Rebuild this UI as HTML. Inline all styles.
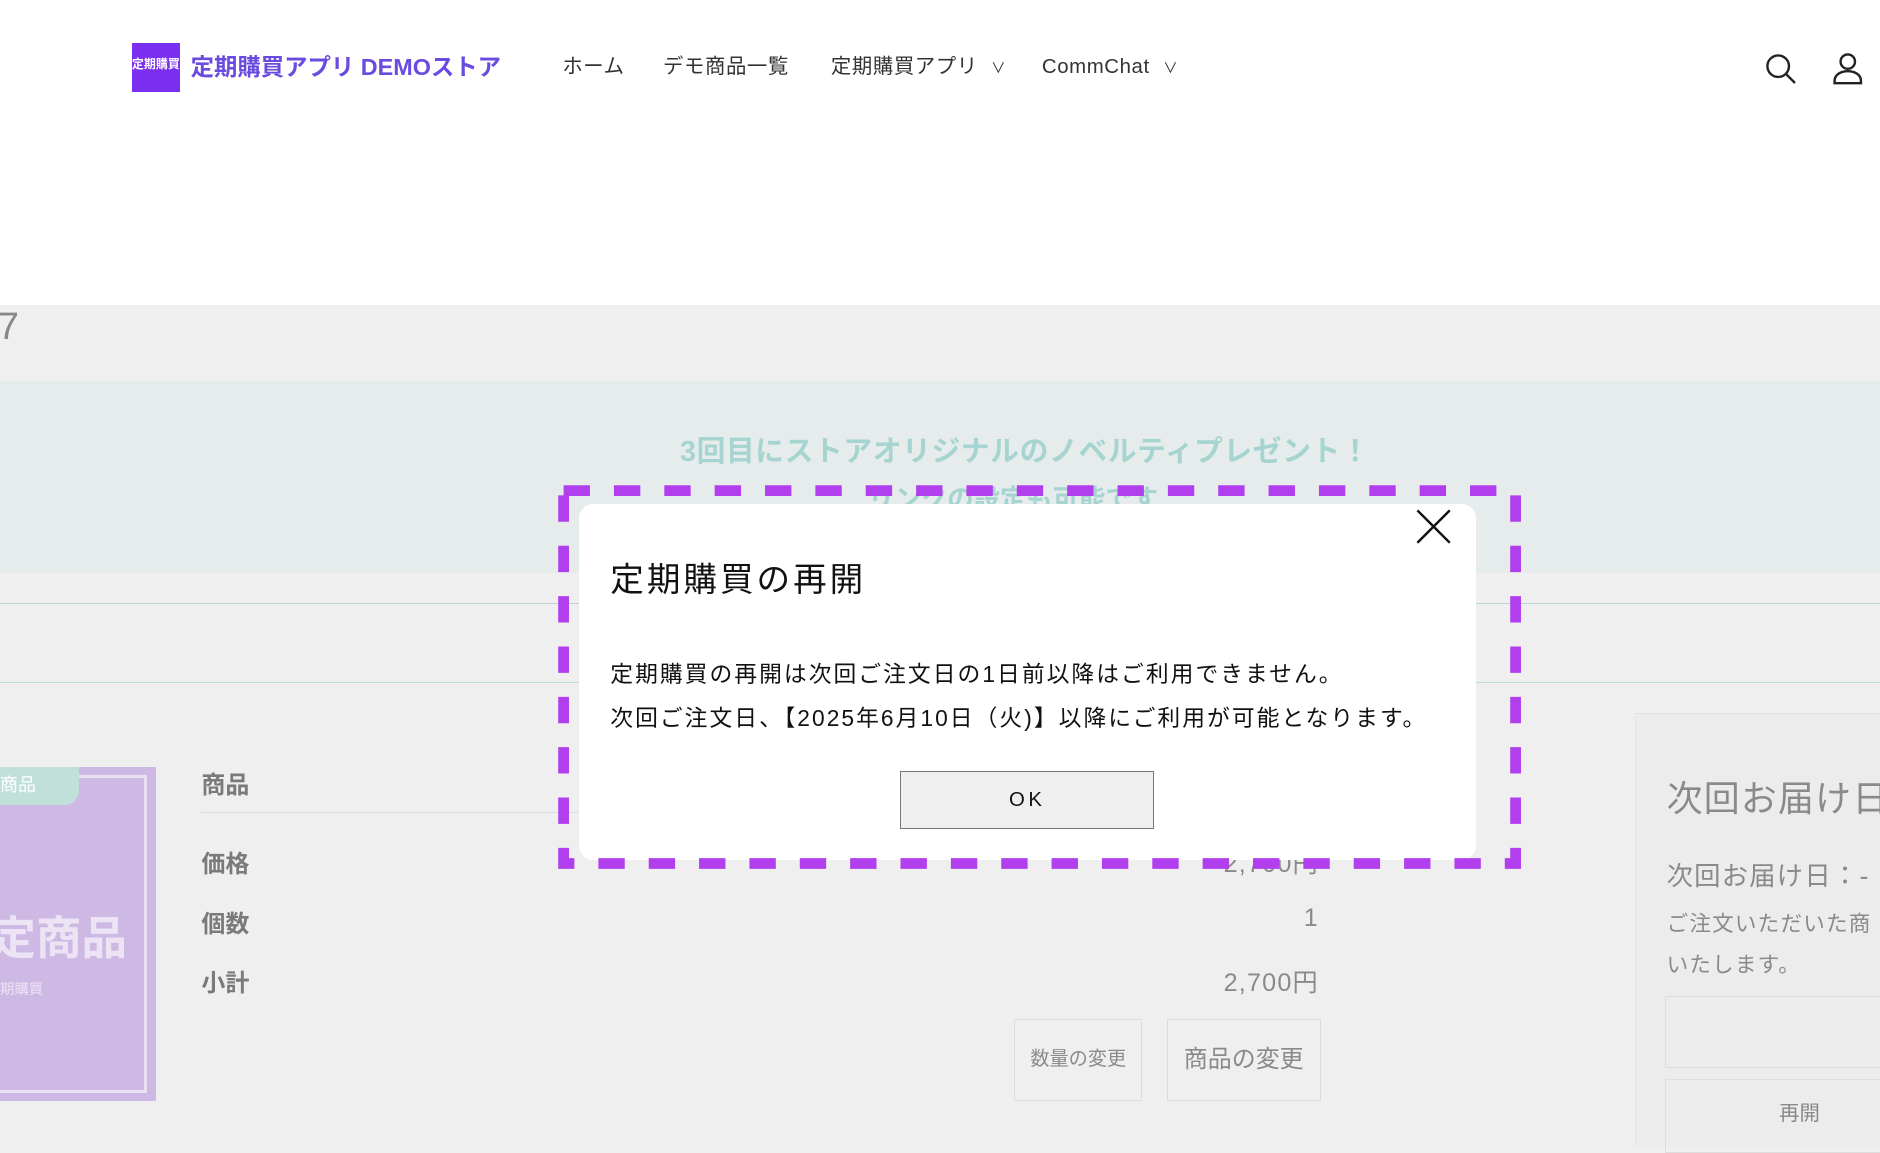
<!DOCTYPE html>
<html><head><meta charset="utf-8"><style>
html{zoom:1.19898}
body{margin:0;width:1568px;height:949px;overflow:hidden;position:relative;background:#efefef;font-family:"Liberation Sans","Noto Sans CJK JP",sans-serif;}
.a{position:absolute;white-space:nowrap}
.hdr{position:absolute;left:0;top:0;width:1568px;height:254px;background:#fff}
.nav{font-size:17px;color:#333;top:44px;height:24px;line-height:24px;letter-spacing:0.5px}
.lbl{font-size:20px;font-weight:bold;color:#7a7a7a;left:168px}
.val{font-size:21px;color:#8a8a8a;right:468px;letter-spacing:1px}
</style></head><body>
<div class="hdr"></div>
<div class="a" style="left:110px;top:36px;width:40px;height:41px;background:#7b2ff0;color:#fff;font-size:10px;font-weight:bold;line-height:36px;text-align:center">定期購買</div>
<div class="a" style="left:159px;top:44px;font-size:19.5px;line-height:24px;font-weight:bold;color:#6a4be0">定期購買アプリ DEMOストア</div>
<div class="a nav" style="left:469px">ホーム</div>
<div class="a nav" style="left:553px">デモ商品一覧</div>
<div class="a nav" style="left:693px">定期購買アプリ <span style="font-size:12px;margin-left:6px">∨</span></div>
<div class="a nav" style="left:869px">CommChat <span style="font-size:12px;margin-left:6px">∨</span></div>
<svg class="a" style="left:1472px;top:44px" width="28" height="28" viewBox="0 0 28 28" fill="none" stroke="#222" stroke-width="2"><circle cx="11" cy="11" r="9"/><path d="M18 18l7 7"/></svg>
<svg class="a" style="left:1527px;top:43px" width="28" height="28" viewBox="0 0 28 28" fill="none" stroke="#222" stroke-width="2"><circle cx="14" cy="8" r="6"/><path d="M3 26v-2c0-5 5-8 11-8s11 3 11 8v2z"/></svg>

<div class="a" style="left:-2px;top:254px;font-size:32px;color:#888">7</div>
<div class="a" style="left:0;top:318px;width:1568px;height:160px;background:#e6ecec"></div>
<div class="a" style="left:0;top:358px;width:1710px;text-align:center;font-size:24px;font-weight:bold;color:#a6d4d0;letter-spacing:0.5px">3回目にストアオリジナルのノベルティプレゼント！</div>
<div class="a" style="left:0;top:398px;width:1690px;text-align:center;font-size:22px;font-weight:bold;color:#a6d4d0">リンクの設定も可能です</div>
<div class="a" style="left:0;top:503px;width:1568px;height:1px;background:#bcd4d4"></div>
<div class="a" style="left:0;top:569px;width:1568px;height:1px;background:#bcdcd6"></div>

<div class="a" style="left:0;top:640px;width:130px;height:278px;background:#cdb9e3"></div>
<div class="a" style="left:-10px;top:646px;width:133px;height:266px;border:3px solid #e9e1f3;box-sizing:border-box"></div>
<div class="a" style="left:0;top:640px;width:66px;height:31px;background:#c2e0da;border-radius:0 0 12px 0;color:#fff;font-size:15px;line-height:31px">商品</div>
<div class="a" style="left:-8px;top:752px;font-size:38px;font-weight:bold;color:#ece4f4">定商品</div>
<div class="a" style="left:0;top:816px;font-size:12px;color:#ece4f4">期購買</div>

<div class="a lbl" style="top:638px">商品</div>
<div class="a" style="left:168px;top:677px;width:932px;height:1px;background:#dcdcdc"></div>
<div class="a lbl" style="top:704px">価格</div><div class="a val" style="top:704px">2,700円</div>
<div class="a lbl" style="top:754px">個数</div><div class="a val" style="top:754px">1</div>
<div class="a lbl" style="top:803px">小計</div><div class="a val" style="top:803px">2,700円</div>
<div class="a" style="left:846px;top:850px;width:105px;height:67px;border:1px solid #ddd;color:#8a8a8a;font-size:16px;line-height:67px;text-align:center">数量の変更</div>
<div class="a" style="left:973px;top:850px;width:127px;height:67px;border:1px solid #ddd;color:#8a8a8a;font-size:20px;line-height:67px;text-align:center">商品の変更</div>

<div class="a" style="left:1364px;top:595px;width:210px;height:360px;background:#ececec;border-top:1px solid #e0e0e0;border-left:1px solid #e4e4e4"></div>
<div class="a" style="left:1390px;top:642px;font-size:30px;color:#8a8a8a;letter-spacing:1px">次回お届け日</div>
<div class="a" style="left:1390px;top:712px;font-size:22px;color:#8a8a8a;letter-spacing:1px">次回お届け日：-</div>
<div class="a" style="left:1390px;top:754px;font-size:18px;color:#8a8a8a;line-height:34px;letter-spacing:1px">ご注文いただいた商<br>いたします。</div>
<div class="a" style="left:1389px;top:831px;width:200px;height:58px;border:1px solid #ddd;border-right:0"></div>
<div class="a" style="left:1389px;top:900px;width:200px;height:60px;border:1px solid #ddd;border-right:0;color:#888;font-size:17px;line-height:58px;text-indent:94px">再開</div>

<div class="a" style="left:483px;top:420px;width:748px;height:297px;background:#fff;border-radius:12px"></div>
<svg class="a" style="left:462px;top:401px" width="810" height="325"><rect x="8" y="8" width="794" height="311" fill="none" stroke="#b23fee" stroke-width="9" stroke-dasharray="22 20"/></svg>
<div class="a" style="left:509px;top:460px;font-size:28px;color:#111;letter-spacing:2.5px">定期購買の再開</div>
<svg class="a" style="left:1180px;top:424px" width="31" height="31" viewBox="0 0 31 31" stroke="#111" stroke-width="2"><path d="M2 2l27 27M29 2L2 29"/></svg>
<div class="a" style="left:509px;top:545px;font-size:19px;color:#111;line-height:36px;letter-spacing:1.7px">定期購買の再開は次回ご注文日の1日前以降はご利用できません。<br>次回ご注文日、【2025年6月10日（火)】以降にご利用が可能となります。</div>
<div class="a" style="left:751px;top:643px;width:210px;height:47px;background:#efefef;border:1px solid #777;font-size:17px;letter-spacing:3px;line-height:47px;text-align:center;color:#111">OK</div>
</body></html>
